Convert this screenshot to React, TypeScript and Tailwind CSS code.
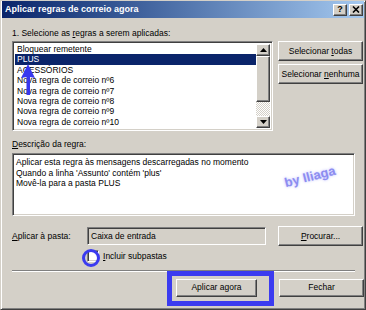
import React from "react";

const raised =
  "border border-t-white border-l-white border-r-[#404040] border-b-[#404040] shadow-[inset_-1px_-1px_0_#808080]";
const sunken =
  "border border-t-[#808080] border-l-[#808080] border-r-white border-b-white shadow-[inset_1px_1px_0_#404040,inset_-1px_-1px_0_#d4d0c8]";

const rules = [
  "Bloquear remetente",
  "PLUS",
  "ACESSÓRIOS",
  "Nova regra de correio nº6",
  "Nova regra de correio nº7",
  "Nova regra de correio nº8",
  "Nova regra de correio nº9",
  "Nova regra de correio nº10",
  "Nova regra de correio nº11",
];

function Btn({ children, className = "" }: { children: React.ReactNode; className?: string }) {
  return (
    <div className={`flex items-center justify-center bg-[#d4d0c8] text-black ${raised} ${className}`}>
      <span>{children}</span>
    </div>
  );
}

function Arrow({ up }: { up?: boolean }) {
  return (
    <svg width="7" height="4" viewBox="0 0 7 4">
      <path d={up ? "M3.5 0 L7 4 L0 4 Z" : "M0 0 L7 0 L3.5 4 Z"} fill="black" />
    </svg>
  );
}

export default function App() {
  return (
    <div className="relative w-[366px] h-[310px] overflow-hidden bg-[#d4d0c8] font-['Liberation_Sans',Arial,sans-serif] text-[8.5px] text-black border border-t-[#d4d0c8] border-l-[#d4d0c8] border-r-[#404040] border-b-[#404040] shadow-[inset_1px_1px_0_white,inset_-1px_-1px_0_#808080]">
      {/* title bar */}
      <div className="mx-px flex h-[17px] items-center justify-between bg-linear-to-r from-[#0a246a] to-[#a6caf0] pl-[3px] pr-[1px]">
        <span className="text-[9px] font-bold text-white">Aplicar regras de correio agora</span>
        <div className="flex gap-[2px]">
          <Btn className="h-[12px] w-[14px] text-[9px] font-bold leading-none">?</Btn>
          <Btn className="h-[12px] w-[14px]">
            <svg width="8" height="7" viewBox="0 0 8 7" className="block">
              <path d="M1 0.5 L7 6.5 M7 0.5 L1 6.5" stroke="black" strokeWidth="1.6" />
            </svg>
          </Btn>
        </div>
      </div>

      <div className="flex flex-col pl-[11px] pr-[1px]">
        <div className="mt-[10px] h-[10px] leading-[10px]">
          1. Selecione as <span className="underline">r</span>egras a serem aplicadas:
        </div>

        <div className="mt-[3px] flex">
          {/* rules list */}
          <div className={`flex h-[90px] w-[261px] bg-white p-[2px] ${sunken}`}>
            <div className="flex-1 overflow-hidden">
              {rules.map((r) => (
                <div
                  key={r}
                  className={`h-[10.4px] whitespace-nowrap pl-[2px] leading-[10.4px] ${
                    r === "PLUS" ? "bg-[#0a246a] text-white" : ""
                  }`}
                >
                  {r}
                </div>
              ))}
            </div>
            <div className="flex w-[14px] flex-col">
              <Btn className="h-[12px]">
                <Arrow up />
              </Btn>
              <div className={`h-[46px] bg-[#d4d0c8] ${raised}`} />
              <div className="flex-1 bg-[repeating-conic-gradient(#ffffff_0_25%,#d4d0c8_0_50%)] bg-size-[2px_2px]" />
              <Btn className="h-[12px]">
                <Arrow />
              </Btn>
            </div>
          </div>

          <div className="ml-[5px] flex flex-col gap-[3px]">
            <Btn className="h-[20px] w-[85px]">
              Selecionar <span className="underline">t</span>odas
            </Btn>
            <Btn className="h-[20px] w-[85px]">
              Selecionar <span className="underline">n</span>enhuma
            </Btn>
          </div>
        </div>

        <div className="mt-[8px] h-[10px] leading-[10px]">
          <span className="underline">D</span>escrição da regra:
        </div>

        <div className={`mt-[4px] h-[63px] w-[343px] bg-white px-[3px] py-[3px] ${sunken}`}>
          <div className="leading-[10.5px]">Aplicar esta regra às mensagens descarregadas no momento</div>
          <div className="leading-[10.5px]">Quando a linha 'Assunto' contém 'plus'</div>
          <div className="leading-[10.5px]">Movê-la para a pasta PLUS</div>
        </div>

        <div className="mt-[10px] flex items-center">
          <div className="w-[75px]">
            <span className="underline">A</span>plicar à pasta:
          </div>
          <div className={`flex h-[18px] w-[179px] items-start bg-[#d4d0c8] px-[3px] pt-[2px] ${sunken}`}>
            Caixa de entrada
          </div>
          <Btn className="ml-[12px] h-[20px] w-[85px]">
            <span className="underline">P</span>rocurar...
          </Btn>
        </div>

        <div className="mt-[4px] ml-[75px] flex items-center gap-[4px]">
          <div className={`h-[12px] w-[12px] bg-white ${sunken}`} />
          <span>
            <span className="underline">I</span>ncluir subpastas
          </span>
        </div>

        <div className="mt-[7px] h-[2px] w-[343px] border-t border-t-[#808080] border-b border-b-white" />

        <div className="mt-[7px] flex justify-end gap-[22px]">
          <Btn className="h-[18px] w-[81px]">Aplicar agora</Btn>
          <Btn className="h-[18px] w-[85px]">Fechar</Btn>
        </div>
      </div>

      {/* annotations drawn over the screenshot */}
      <div className="absolute left-[166px] top-[270px] h-[35px] w-[107px] border-[5px] border-[#3b3bf0]" />
      <div className="absolute left-[81px] top-[248px] h-[18px] w-[18px] rounded-full border-[3px] border-[#3b3bf0]" />
      <svg className="absolute left-[18px] top-[62px]" width="18" height="34" viewBox="0 0 18 34">
        <path d="M9 1 L16 15 L11 14 L11 32 L7.5 32 L7.5 14 L2 15 Z" fill="#3838ee" />
      </svg>
      <div className="absolute left-[283px] top-[166px] -rotate-[14deg] text-[13px] font-bold text-[#8c8cf0] [text-shadow:0_0_3px_#b8b8ff]">
        by Iliaga
      </div>
    </div>
  );
}
